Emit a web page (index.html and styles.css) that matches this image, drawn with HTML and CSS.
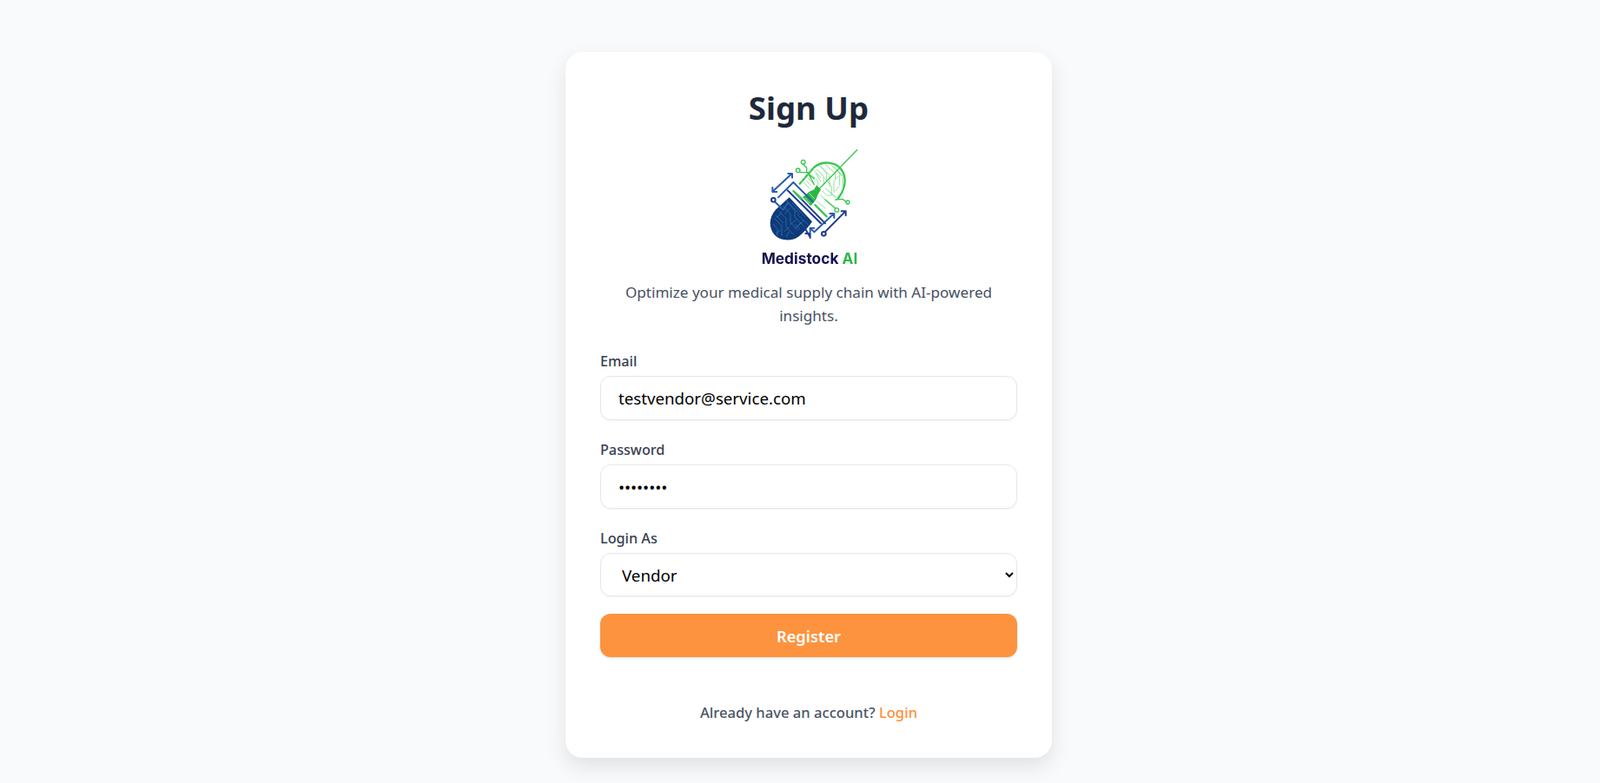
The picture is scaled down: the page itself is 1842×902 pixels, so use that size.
FILE: index.html
```html
<!DOCTYPE html>
<html lang="en">
<head>
<meta charset="utf-8">
<title>Sign Up</title>
<link rel="stylesheet" href="styles.css">
</head>
<body>
<main class="card">
  <h1 class="title">Sign Up</h1>
  <svg class="logo" viewBox="18 0 450 510" role="img" aria-label="Medistock AI logo">
    <g class="g-thin" stroke-width="2.6">
      <path d="M270 135 295 160V185M285 125 315 155V195M300 118 335 150V170M320 120 350 150V190M345 160 330 175V215M310 180 322 195V225M255 155 275 175V190M235 175 250 190M290 210 305 225 320 225M285 225 310 250M270 245 300 270M300 200 340 235M262 140 285 165M330 125 358 155M278 120 305 148V172M342 140 360 160V195M300 168 318 186M240 165 258 183M225 180 245 200M348 195 335 210M268 150 285 178M292 232 318 258M310 208 332 228"/>
    </g>
    <g class="g-line" stroke-width="4">
      <path d="M410 68 278 204"/>
      <path d="M262 128C290 105 335 108 355 135C378 165 368 205 345 235" stroke-width="7"/>
      <path d="M212 185 262 128" stroke-width="7" stroke-dasharray="9 6"/>
      <path d="M224 118 236 130V145L262 168M213 146 240 146 262 188M335 240 360 238 375 250M300 240 338 272"/>
      <circle cx="224" cy="110" r="7" class="ring"/><circle cx="206" cy="139" r="7" class="ring"/>
      <circle cx="378" cy="249" r="6" class="ring"/><circle cx="340" cy="276" r="7" class="ring"/>
    </g>
    <path class="g-fill" d="M222 232 245 212 262 205 270 190 285 205 275 222 268 240 250 262Z"/>
    <path class="g-gap" stroke-width="2.5" d="M238 226 254 244M246 218 262 236M230 234 246 252"/>
    <path class="navy-fill" d="M176 232 255 316C240 338 222 358 205 370 180 386 140 382 122 358 104 334 106 300 130 274Z"/>
    <g class="trace" stroke-width="2.2">
      <path d="M170 250 195 278V300L225 330M155 262 180 290V320L205 345M140 280 165 305V335L190 360M125 305 150 330V365M120 325 135 340V365M185 250 230 300M205 292 240 325M175 335 160 350M200 310 180 325M150 285 135 300M165 240 210 290M130 295 155 320M178 270 160 288M215 320 195 340M175 352 165 368M145 345 130 358M195 325 212 340M225 312 205 332"/>
    </g>
    <g class="b-line" stroke-width="6">
      <path d="M185 150 118 212M172 150H186V164M118 198V213H133"/>
      <path d="M138 232 190 180 258 248"/>
      <path d="M127 248 155 275 172 250"/>
      <path d="M330 288 262 352 248 338M316 288H331V303M248 352V338H262"/>
    </g>
    <g class="n-line" stroke-width="6">
      <path d="M170 208 285 322M195 215 300 322M228 335 248 370M232 357H248V372"/>
      <path d="M298 353 370 280M356 280H371V295"/>
      <circle cx="121" cy="241" r="7" class="ring"/><circle cx="295" cy="358" r="7" class="ring"/>
    </g>
    <path class="g-line" stroke-width="7" d="M190 210 218 236M265 258 305 298"/>
    <text class="wordmark" x="80" y="463" textLength="332" lengthAdjust="spacingAndGlyphs">Medistock <tspan class="wordmark-ai">AI</tspan></text>
  </svg>
  <p class="tagline">Optimize your medical supply chain with AI-powered insights.</p>
  <form class="form">
    <div class="field">
      <label class="label" for="email">Email</label>
      <input class="control" id="email" type="email" value="testvendor@service.com">
    </div>
    <div class="field">
      <label class="label" for="password">Password</label>
      <input class="control" id="password" type="password" value="password">
    </div>
    <div class="field field-last">
      <label class="label" for="role">Login As</label>
      <select class="control control-select" id="role"><option>Vendor</option></select>
    </div>
    <button class="submit" type="button">Register</button>
  </form>
  <p class="switch">Already have an account? <a class="switch-link" href="#">Login</a></p>
</main>
</body>
</html>
```
FILE: styles.css
```css
* { box-sizing: border-box; }
html, body { margin: 0; }
body {
  min-height: 902px;
  background: #f9fafc;
  font-family: "Noto Sans", "Open Sans", sans-serif;
  display: flex;
  justify-content: center;
  padding: 60px 0 0 20px;
}
.card {
  width: 560px;
  height: 813px;
  padding: 40px;
  background: #fff;
  border-radius: 20px;
  box-shadow: 0 10px 25px rgba(0,0,0,.1);
  text-align: center;
}
.title {
  margin: 0 0 2px;
  font-size: 36.6px;
  line-height: 48px;
  font-weight: 700;
  color: #1e293b;
}
.logo { display: block; width: 150px; height: 170px; margin: 0 auto; filter: blur(.35px); }
.g-line, .b-line, .n-line, .g-thin, .trace, .g-gap { fill: none; stroke-linecap: round; stroke-linejoin: round; }
.g-line { stroke: #37c84f; }
.g-thin { stroke: #7fdc8e; }
.g-fill { fill: #2bb744; }
.g-gap { stroke: #bdeec6; }
.navy-fill { fill: #0f3a78; }
.trace { stroke: #2f78b8; }
.b-line { stroke: #2a5cad; }
.n-line { stroke: #1f3d8c; }
.ring { fill: #fff; }
.wordmark { font-family: Inter, sans-serif; font-weight: 700; font-size: 50px; fill: #12124f; }
.wordmark-ai { fill: #2fb84a; }
.tagline {
  margin: 3px 0 28px;
  font-size: 17.1px;
  line-height: 27px;
  color: #475063;
}
.form { text-align: left; }
.field { margin-bottom: 23px; }
.field-last { margin-bottom: 20px; }
.label {
  display: block;
  margin-bottom: 6px;
  font-size: 16.2px;
  line-height: 22px;
  font-weight: 500;
  color: #374151;
}
.control {
  display: block;
  width: 100%;
  height: 51px;
  padding: 0 20px;
  border: 1px solid #e5e7eb;
  border-radius: 12px;
  background: #fff;
  font: inherit;
  font-size: 18.7px;
  color: #000;
  box-shadow: 0 1px 2px rgba(0,0,0,.05);
}
.control-select { height: 50px; }
.submit {
  display: block;
  width: 100%;
  height: 50px;
  border: 0;
  border-radius: 12px;
  background: #fd933e;
  color: #fff;
  font: inherit;
  font-size: 18.3px;
  font-weight: 600;
  box-shadow: 0 1px 3px rgba(0,0,0,.15);
}
.switch { margin: 51px 0 0; font-size: 16.6px; line-height: 26px; font-weight: 500; color: #4b5563; }
.switch-link { color: #fd8f3a; text-decoration: none; }
```
